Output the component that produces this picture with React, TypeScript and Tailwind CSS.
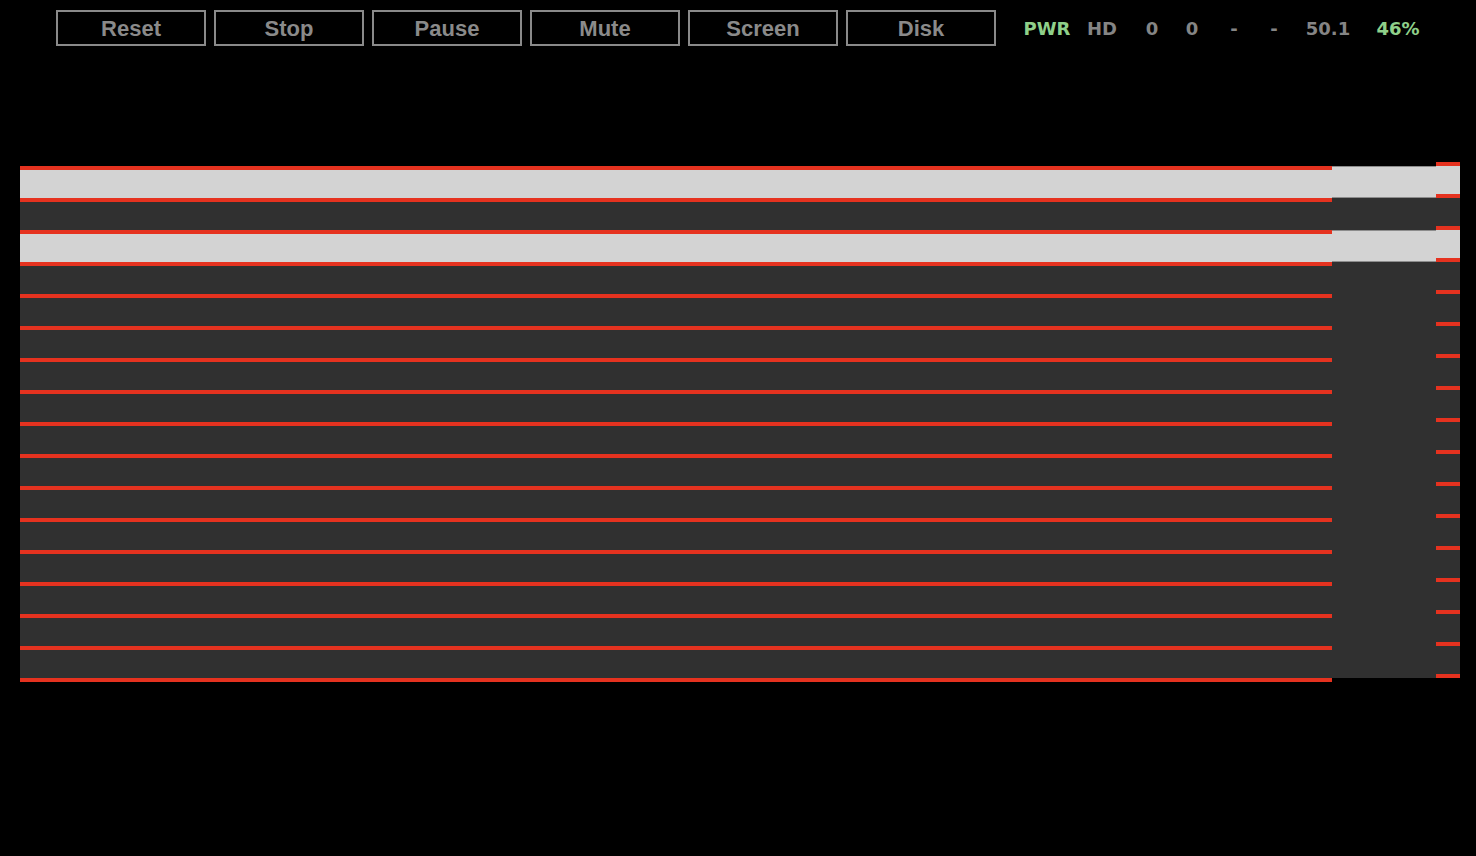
import * as React from 'react'

const buttons = ['Reset', 'Stop', 'Pause', 'Mute', 'Screen', 'Disk']

const status: { label: string; w: string; green?: boolean }[] = [
  { label: 'PWR', w: 'w-[54px]', green: true },
  { label: 'HD', w: 'w-[56px]' },
  { label: '0', w: 'w-[44px]' },
  { label: '0', w: 'w-[36px]' },
  { label: '-', w: 'w-[48px]' },
  { label: '-', w: 'w-[32px]' },
  { label: '50.1', w: 'w-[76px]' },
  { label: '46%', w: 'w-[64px]', green: true },
]

const rows = Array.from({ length: 16 }, (_, i) => i === 0 || i === 2)

function Toolbar() {
  return (
    <div className="flex items-center pt-[10px]">
      <div className="ml-[56px] flex gap-2">
        {buttons.map((b) => (
          <button
            key={b}
            className="h-[36px] w-[150px] border-2 border-[#8a8a8a] bg-black pt-[2px] text-[22px] font-bold leading-none text-[#8a8a8a] font-['Liberation_Sans',Arial,sans-serif]"
          >
            {b}
          </button>
        ))}
      </div>
      <div className="ml-[24px] flex font-['DejaVu_Sans',Verdana,sans-serif] text-[18px] font-bold">
        {status.map((s, i) => (
          <span
            key={i}
            className={`${s.w} text-center ${s.green ? 'text-[#8fd08a]' : 'text-[#858585]'}`}
          >
            {s.label}
          </span>
        ))}
      </div>
    </div>
  )
}

function TrackArea() {
  return (
    <div className="ml-[20px] mt-[116px] flex">
      {/* long tracks */}
      <div className="flex w-[1312px] flex-col pt-1">
        {rows.map((light, i) => (
          <div key={i} className="flex flex-col">
            <div className="h-[4px] bg-[#e5321f]" />
            <div className={`h-[28px] ${light ? 'bg-[#d3d3d3]' : 'bg-[#303030]'}`} />
          </div>
        ))}
        <div className="h-[4px] bg-[#e5321f]" />
      </div>
      {/* side column */}
      <div className="flex w-[128px] flex-col">
        <div className="flex h-[4px]">
          <div className="w-[104px]" />
          <div className="w-[24px] bg-[#e5321f]" />
        </div>
        {rows.map((light, i) => (
          <div key={i} className="flex h-[32px]">
            <div
              className={`w-[104px] ${light ? 'border-y border-[#8c8c8c] bg-[#d3d3d3]' : 'bg-[#303030]'}`}
            />
            <div className="flex w-[24px] flex-col">
              <div className={`h-[28px] ${light ? 'bg-[#d3d3d3]' : 'bg-[#303030]'}`} />
              <div className="h-[4px] bg-[#e5321f]" />
            </div>
          </div>
        ))}
      </div>
    </div>
  )
}

export default function App() {
  return (
    <div className="h-[856px] w-full overflow-hidden bg-black">
      <Toolbar />
      <TrackArea />
    </div>
  )
}
